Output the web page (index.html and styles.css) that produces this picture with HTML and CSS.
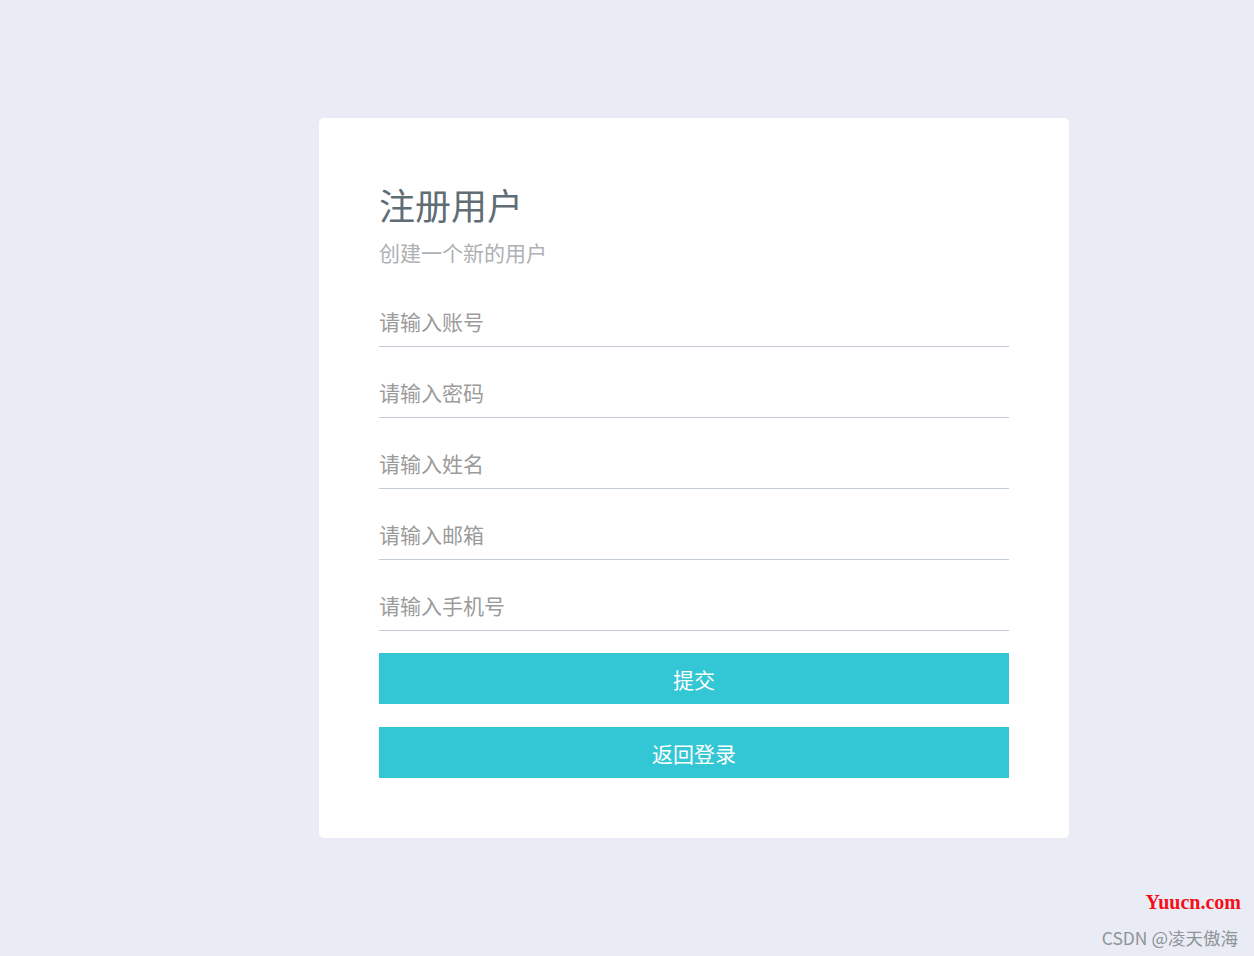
FILE: index.html
```html
<!DOCTYPE html>
<html lang="zh-CN">
<head>
    <meta charset="UTF-8">
    <meta name="viewport" content="width=device-width, initial-scale=1.0">
    <title>注册用户</title>
    <link rel="stylesheet" href="styles.css">
</head>
<body>
    <div class="register-box">
        <h1 class="title">注册用户</h1>
        <p class="subtitle">创建一个新的用户</p>
        <form class="register-form">
            <input type="text" placeholder="请输入账号">
            <input type="password" placeholder="请输入密码">
            <input type="text" placeholder="请输入姓名">
            <input type="text" placeholder="请输入邮箱">
            <input type="text" placeholder="请输入手机号">
            <button type="submit" class="btn btn-submit">提交</button>
            <button type="button" class="btn btn-back">返回登录</button>
        </form>
    </div>
    <div class="watermark">
        <span class="wm-site">Yuucn.com</span>
        <span class="wm-author">CSDN @凌天傲海</span>
    </div>
</body>
</html>
```

FILE: styles.css
```css
html, body {
    height: 100%;
}

body {
    margin: 0;
    background: #e9ecf4;
    font-family: "Noto Sans CJK SC", "Noto Sans", sans-serif;
    position: relative;
    overflow: hidden;
}

.register-box {
    box-sizing: border-box;
    width: 750px;
    margin: 118px 0 0 319px;
    padding: 60px;
    background: #fff;
    border-radius: 5px;
}

.title {
    margin: 2px 0 0;
    font-size: 36px;
    font-weight: 400;
    line-height: 48px;
    color: #5f6d75;
}

.subtitle {
    margin: 9px 0 0;
    font-size: 21px;
    line-height: 30px;
    color: #adb1b4;
}

.register-form {
    display: flex;
    flex-direction: column;
    margin-top: 29px;
}

.register-form input {
    box-sizing: border-box;
    height: 51px;
    margin-bottom: 20px;
    padding: 0;
    border: none;
    border-bottom: 1px solid #c3ccd4;
    outline: none;
    font-family: inherit;
    font-size: 21px;
    color: #555;
    background: transparent;
}

.register-form input::placeholder {
    color: #9b9b9b;
}

.register-form input:nth-of-type(5) {
    margin-bottom: 22px;
}

.btn {
    height: 51px;
    border: none;
    background: #33c6d4;
    color: #fff;
    font-family: inherit;
    font-size: 21px;
    cursor: pointer;
}

.btn-submit {
    margin-bottom: 23px;
}

.watermark {
    position: absolute;
    right: 13px;
    bottom: 6px;
    display: flex;
    flex-direction: column;
    align-items: flex-end;
}

.wm-site {
    font-family: "Liberation Serif", serif;
    font-size: 20px;
    font-weight: 700;
    color: #f4101b;
    line-height: 24px;
}

.wm-author {
    margin-top: 12px;
    margin-right: 3px;
    font-size: 17.5px;
    color: #8f9499;
    line-height: 24px;
}
```
